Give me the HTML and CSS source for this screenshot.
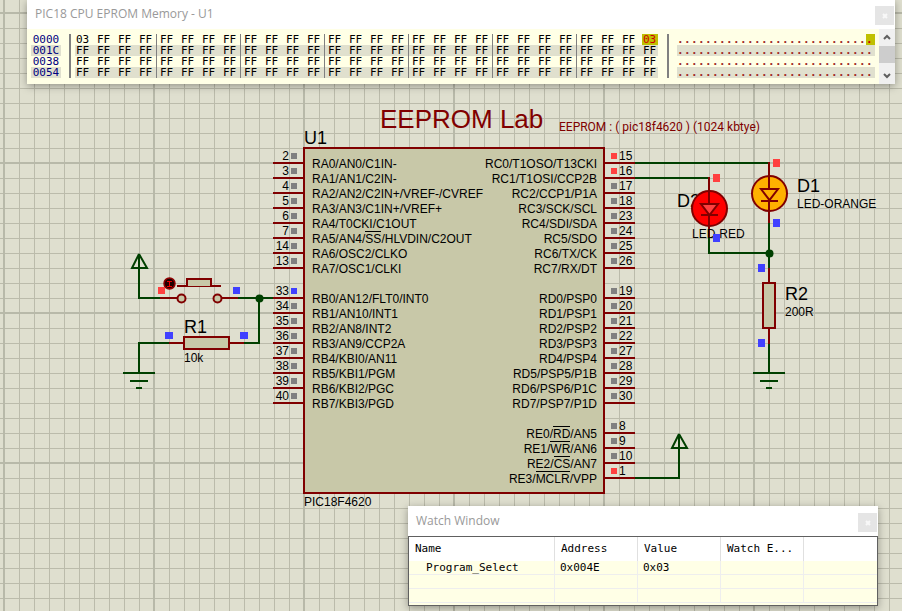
FILE: index.html
```html
<!DOCTYPE html>
<html lang="en">
<head>
<meta charset="utf-8">
<title>EEPROM Lab</title>
<link rel="stylesheet" href="styles.css">
</head>
<body>
<main class="sheet">
  <svg class="wiring" width="902" height="611" viewBox="0 0 902 611" role="img" aria-label="EEPROM Lab schematic">
    <text class="heading" x="380" y="128">EEPROM Lab</text>
    <text class="note" x="559" y="131">EEPROM : ( pic18f4620 ) (1024 kbtye)</text>
    <text class="ref" x="304" y="144">U1</text>
    <text class="value" x="304" y="506">PIC18F4620</text>

    <!-- push button with pull-down -->
    <path class="wire" d="M139 268V298H160M238 298H273M259 298V343H243M169 343H139V373"/>
    <path class="wire" d="M139 254V269M139 254L132 268H147L139 254"/>
    <path class="wire" d="M123 373H155M130 381H148M136 388H142"/>
    <path class="part" d="M160 298H178M221 298H238M169 343H183M229 343H244M177 286H221"/>
    <circle class="part body" cx="181.500" cy="298.500" r="4"/>
    <circle class="part body" cx="217.500" cy="298.500" r="4"/>
    <path class="part body" d="M187 286V279H211V286"/>
    <circle cx="169.500" cy="283.500" r="5.500" fill="#200" stroke="#900000" stroke-width="1.500"/>
    <path d="M167 281.500H172M169.500 281.500V286M167 286.500H172" stroke="#f00000" fill="none"/>
    <circle class="joint" cx="259.500" cy="298.500" r="4"/>
    <rect class="part body" x="184" y="337" width="45" height="12"/>
    <text class="ref" x="184" y="333">R1</text>
    <text class="value" x="184" y="362">10k</text>
    <rect class="high" x="158" y="287" width="7" height="7"/>
    <rect class="low" x="233" y="287" width="7" height="7"/>
    <rect class="low" x="165" y="332" width="8" height="7"/>
    <rect class="low" x="240" y="332" width="8" height="7"/>

    <!-- LEDs and series resistor -->
    <text class="ref" x="677" y="207">D2</text>
    <path class="wire" d="M635 163H769M635 178H709M709 237V253H769M769 223V268M769 343V373"/>
    <path class="wire" d="M753 373H785M760 381H778M766 388H772"/>
    <circle class="part" cx="769.500" cy="193.500" r="17.500" fill="#ffb000"/>
    <circle class="part" cx="709.500" cy="208.500" r="17.500" fill="#ff0000"/>
    <path class="part" d="M769 162V223M769 268V283M769 328V344"/>
    <path class="part" d="M709 177V238"/>
    <path class="part" d="M761 189H778L769.500 200ZM761 201H778" fill="#ffb000"/>
    <path class="part" d="M701 204H718L709.500 215ZM701 215H718" fill="#ff4040"/>
    <text class="value" x="692" y="238">LED-RED</text>
    <text class="ref" x="797" y="192">D1</text>
    <text class="value" x="797" y="208">LED-ORANGE</text>
    <circle class="joint" cx="769.500" cy="253.500" r="4"/>
    <rect class="part body" x="763" y="283" width="12" height="45"/>
    <text class="ref" x="785" y="300">R2</text>
    <text class="value" x="785" y="316">200R</text>
    <rect class="high" x="773" y="159" width="7" height="8"/>
    <rect class="high" x="713" y="174" width="7" height="8"/>
    <rect class="low" x="773" y="219" width="7" height="8"/>
    <rect class="low" x="713" y="234" width="7" height="8"/>
    <rect class="low" x="758" y="264" width="7" height="8"/>
    <rect class="low" x="758" y="339" width="7" height="8"/>

    <!-- MCLR pull-up -->
    <path class="wire" d="M635 478H679V434M679 434L672 448H687L679 434"/>
  </svg>

  <section class="chip" aria-label="U1 PIC18F4620">
    <div class="leads leads-left">
      <ul><li>2</li><li>3</li><li>4</li><li>5</li><li>6</li><li>7</li><li>14</li><li>13</li></ul>
      <ul><li class="is-low">33</li><li>34</li><li>35</li><li>36</li><li>37</li><li>38</li><li>39</li><li>40</li></ul>
    </div>
    <div class="package">
      <div class="names">
        <ul>
          <li>RA0/AN0/C1IN-</li><li>RA1/AN1/C2IN-</li><li>RA2/AN2/C2IN+/VREF-/CVREF</li><li>RA3/AN3/C1IN+/VREF+</li>
          <li>RA4/T0CKI/C1OUT</li><li>RA5/AN4/<span class="bar">SS</span>/HLVDIN/C2OUT</li><li>RA6/OSC2/CLKO</li><li>RA7/OSC1/CLKI</li>
        </ul>
        <ul>
          <li>RB0/AN12/FLT0/INT0</li><li>RB1/AN10/INT1</li><li>RB2/AN8/INT2</li><li>RB3/AN9/CCP2A</li>
          <li>RB4/KBI0/AN11</li><li>RB5/KBI1/PGM</li><li>RB6/KBI2/PGC</li><li>RB7/KBI3/PGD</li>
        </ul>
      </div>
      <div class="names names-right">
        <ul>
          <li>RC0/T1OSO/T13CKI</li><li>RC1/T1OSI/CCP2B</li><li>RC2/CCP1/P1A</li><li>RC3/SCK/SCL</li>
          <li>RC4/SDI/SDA</li><li>RC5/SDO</li><li>RC6/TX/CK</li><li>RC7/RX/DT</li>
        </ul>
        <ul>
          <li>RD0/PSP0</li><li>RD1/PSP1</li><li>RD2/PSP2</li><li>RD3/PSP3</li>
          <li>RD4/PSP4</li><li>RD5/PSP5/P1B</li><li>RD6/PSP6/P1C</li><li>RD7/PSP7/P1D</li>
        </ul>
        <ul>
          <li>RE0/<span class="bar">RD</span>/AN5</li><li>RE1/<span class="bar">WR</span>/AN6</li>
          <li>RE2/<span class="bar">CS</span>/AN7</li><li>RE3/<span class="bar">MCLR</span>/VPP</li>
        </ul>
      </div>
    </div>
    <div class="leads leads-right">
      <ul><li class="is-high">15</li><li class="is-high">16</li><li>17</li><li>18</li><li>23</li><li>24</li><li>25</li><li>26</li></ul>
      <ul><li>19</li><li>20</li><li>21</li><li>22</li><li>27</li><li>28</li><li>29</li><li>30</li></ul>
      <ul><li>8</li><li>9</li><li>10</li><li class="is-high">1</li></ul>
    </div>
  </section>

  <section class="window memory">
    <header class="titlebar">
      <h2>PIC18 CPU EPROM Memory - U1</h2>
      <button class="close" type="button" aria-label="Close"><svg width="6" height="6" viewBox="0 0 6 6"><path d="M1 1L5 5M5 1L1 5"/></svg></button>
    </header>
    <div class="memory-body">
      <table class="dump"><tbody id="dump"></tbody></table>
      <div class="scroll">
        <button type="button" aria-label="Scroll up"><svg width="8" height="7" viewBox="0 0 8 7"><path d="M1 5L4 2L7 5"/></svg></button>
        <div class="thumb"></div>
        <button type="button" aria-label="Scroll down"><svg width="8" height="7" viewBox="0 0 8 7"><path d="M1 2L4 5L7 2"/></svg></button>
      </div>
    </div>
  </section>

  <section class="window watch">
    <header class="titlebar">
      <h2>Watch Window</h2>
      <button class="close" type="button" aria-label="Close"><svg width="6" height="6" viewBox="0 0 6 6"><path d="M1 1L5 5M5 1L1 5"/></svg></button>
    </header>
    <div class="watch-body">
      <table>
        <colgroup><col class="col-name"><col class="col-item"><col class="col-item"><col class="col-item"><col></colgroup>
        <thead><tr><th>Name</th><th>Address</th><th>Value</th><th>Watch E...</th><th></th></tr></thead>
        <tbody>
          <tr><td class="item">Program_Select</td><td>0x004E</td><td>0x03</td><td></td><td></td></tr>
          <tr><td></td><td></td><td></td><td></td><td></td></tr>
          <tr><td></td><td></td><td></td><td></td><td></td></tr>
        </tbody>
      </table>
    </div>
  </section>
</main>
<script src="dump.js"></script>
</body>
</html>
```
FILE: styles.css
```css
* { box-sizing: border-box; }

body {
  margin: 0;
  overflow: hidden;
  font: 12px/15px "Liberation Sans", Arial, sans-serif;
  color: #000;
}

ul { list-style: none; margin: 0; padding: 0; }

button { border: 0; padding: 0; margin: 0; font: inherit; }

.sheet {
  position: relative;
  min-height: 100vh;
  background-color: #dfdfcf;
  background-image:
    linear-gradient(90deg, #b8b9a9 2px, transparent 2px),
    linear-gradient(#b8b9a9 2px, transparent 2px),
    linear-gradient(90deg, #bbbbab 1px, transparent 1px),
    linear-gradient(#bbbbab 1px, transparent 1px);
  background-size: 150px 150px, 150px 150px, 15px 15px, 15px 15px;
  background-position: 3px 0, 0 12px, 4px 0, 0 13px;
}

/* Wiring */
.wiring { display: block; }
.wiring text { font-size: 12px; fill: #000; }
.wiring .heading { font-size: 26px; fill: #800000; }
.wiring .note { font-family: Roboto, sans-serif; font-size: 12px; fill: #800000; }
.wiring .ref { font-size: 18px; }
.wire { fill: none; stroke: #004000; stroke-width: 2; }
.part { stroke: #800000; stroke-width: 2; }
.body { fill: #c8c8a8; }
.joint { fill: #004000; }
.high { fill: #ff4040; }
.low { fill: #4040ff; }

/* Microcontroller */
.chip {
  position: absolute;
  left: 273px;
  top: 147px;
  display: grid;
  grid-template-columns: 30px 302px 30px;
}
.package {
  display: flex;
  justify-content: space-between;
  padding: 8px 6px 5px 7px;
  border: 2px solid #800000;
  background: #c8c8a8;
}
.names, .leads { display: flex; flex-direction: column; gap: 15px; }
.names li { height: 15px; white-space: nowrap; }
.names-right { text-align: right; }
.bar { border-top: 1px solid #000; }
.leads { padding-top: 2px; }
.leads li {
  display: flex;
  align-items: flex-start;
  gap: 2px;
  height: 15px;
  border-bottom: 2px solid #800000;
}
.leads li::after { content: ""; width: 6px; height: 6px; margin-top: 4px; background: #808080; }
.leads .is-high::after { background: #ff4040; }
.leads .is-low::after { background: #4040ff; }
.leads-left li { justify-content: flex-end; padding-right: 6px; }
.leads-right li { flex-direction: row-reverse; justify-content: flex-end; padding-left: 6px; }

/* Floating windows */
.window {
  position: absolute;
  background: #fff;
  box-shadow: 0 2px 8px rgba(0, 0, 0, .35);
  font: 11px/11px "DejaVu Sans Mono", monospace;
}
.titlebar { display: flex; justify-content: space-between; padding: 0 1px 0 8px; }
.titlebar h2 { margin: 0; font: 12px/28px "Open Sans", sans-serif; color: #999; }
.watch .titlebar h2 { line-height: 30px; }
.close {
  display: grid;
  place-items: center;
  width: 19px;
  height: 19px;
  margin-top: 6px;
  background: #e5e5e5;
}
.close path { stroke: #f8f8f8; stroke-width: 2; }

.memory { left: 27px; right: 7px; top: 0; }
.memory .titlebar { height: 29px; }
.memory-body { display: flex; justify-content: space-between; height: 55px; background: #ffffe6; }
.dump { margin: 5px 0 0 4px; border-collapse: collapse; table-layout: fixed; width: 844px; height: 44px; }
.dump td, .dump th { height: 11px; padding: 0; line-height: 11px; font-weight: normal; }
.dump th { width: 30px; text-align: center; color: #000080; }
.dump tr:nth-child(even) :is(th, td:not(.rule)) { background-color: #e0e0ce; }
.dump .rule { width: 14px; background: linear-gradient(#808080, #808080) 8px 0 / 2px 100% no-repeat; }
.dump .rule-wide { width: 19px; background-position-x: 9px; }
.dump .byte { width: 21px; padding-left: 1px; }
.dump .quad { background-image: linear-gradient(#808080, #808080); background-position: 18px 0; background-size: 1px 100%; background-repeat: no-repeat; }
.dump .byte-last { width: 16px; }
.dump .char { width: 7px; color: #a02828; font-size: 11px; font-weight: bold; }
.dump .char-last { width: 9px; }
.dump .changed { background: #c0c000; color: #d00000; }

.scroll { display: flex; flex-direction: column; width: 16px; background: #f0f0f0; }
.scroll button { display: grid; place-items: center; height: 17px; background: none; }
.scroll path { fill: none; stroke: #606060; stroke-width: 2; }
.thumb { height: 17px; margin-bottom: 4px; background: #cdcdcd; }

.watch { left: 408px; right: 24px; top: 506px; }
.watch .titlebar { height: 30px; }
.watch .close { margin-top: 7px; }
.watch-body { height: 70px; border: 1px solid #606060; background: #ffffe6; }
.watch table { width: 100%; table-layout: fixed; border-collapse: separate; border-spacing: 0; }
.col-name { width: 146px; }
.col-item { width: 83px; }
.watch th {
  height: 24px;
  padding: 0 6px 2px;
  border-right: 1px solid #e0e0e0;
  background: #fff;
  font-weight: normal;
  text-align: left;
  white-space: nowrap;
}
.watch td { height: 14px; padding: 0 5px; border: solid #eeeeee; border-width: 0 1px 1px 0; }
.watch .item { padding-left: 17px; }
.watch tr > :last-child { border-right: 0; }
```
FILE: dump.js
```js
// Builds the four visible lines of the memory dump, 28 bytes each.
const COLUMNS = 28;
const addresses = ["0000", "001C", "0038", "0054"];
const bytes = addresses.map(() => Array(COLUMNS).fill("FF"));
bytes[0][0] = "03";
bytes[0][COLUMNS - 1] = "03";

function addCell(row, tag, text, className) {
  const cell = document.createElement(tag);
  cell.textContent = text;
  cell.className = className;
  row.append(cell);
}

addresses.forEach((address, line) => {
  const row = document.createElement("tr");
  const changed = (i) => (line === 0 && i === COLUMNS - 1 ? " changed" : "");
  const last = (i, name) => (i === COLUMNS - 1 ? name : "");
  addCell(row, "th", address, "");
  addCell(row, "td", "", "rule");
  bytes[line].forEach((value, i) => {
    const quad = i % 4 === 3 && i < COLUMNS - 1 ? " quad" : "";
    addCell(row, "td", value, "byte" + quad + last(i, " byte-last") + changed(i));
  });
  addCell(row, "td", "", "rule rule-wide");
  bytes[line].forEach((_, i) => addCell(row, "td", ".", "char" + last(i, " char-last") + changed(i)));
  document.getElementById("dump").append(row);
});
```
